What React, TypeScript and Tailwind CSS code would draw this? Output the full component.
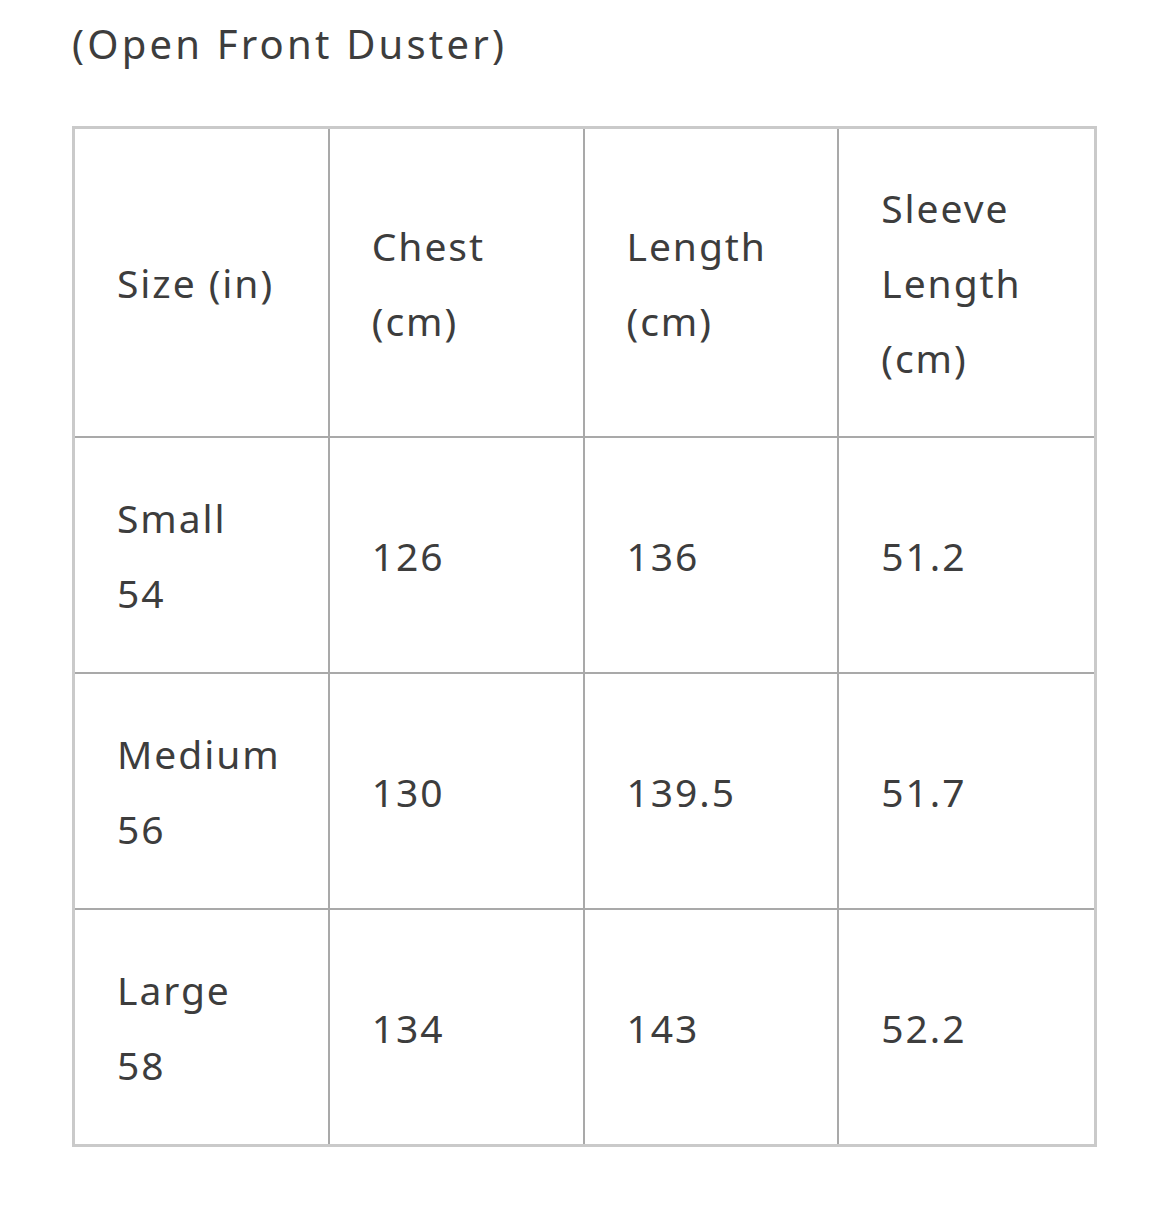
import React from "react";

const rows: { size: [string, string]; chest: string; length: string; sleeve: string }[] = [
  { size: ["Small", "54"], chest: "126", length: "136", sleeve: "51.2" },
  { size: ["Medium", "56"], chest: "130", length: "139.5", sleeve: "51.7" },
  { size: ["Large", "58"], chest: "134", length: "143", sleeve: "52.2" },
];

export default function App() {
  const font = { fontFamily: '"Noto Sans", "Liberation Sans", sans-serif' };
  const head = "align-middle text-left px-[42px] py-[41px] leading-[75px] font-normal";
  const cell = "align-middle text-left px-[42px] py-[42px] leading-[75px] font-normal";
  const inner = "border-r-2 border-b-2 border-[#a9a9a9]";
  const lastCol = "border-b-2 border-[#a9a9a9]";
  const lastRow = "border-r-2 border-[#a9a9a9]";
  return (
    <div className="min-h-[1212px] w-[1169px] bg-white pl-[72px] pt-[14px] text-[#3d3d3d]" style={font}>
      <div className="text-[40px] leading-[60px] tracking-[0.08em]">(Open Front Duster)</div>
      <table className="mt-[52px] w-[1025px] table-fixed border-separate border-spacing-0 border-[3px] border-[#cacaca] text-[39px] tracking-[0.05em]">
        <thead>
          <tr>
            <th className={`${head} ${inner}`}>Size (in)</th>
            <th className={`${head} ${inner}`}>
              Chest
              <br />
              (cm)
            </th>
            <th className={`${head} ${inner}`}>
              Length
              <br />
              (cm)
            </th>
            <th className={`${head} ${lastCol}`}>
              Sleeve
              <br />
              Length
              <br />
              (cm)
            </th>
          </tr>
        </thead>
        <tbody>
          {rows.map((r, i) => {
            const last = i === rows.length - 1;
            const a = last ? lastRow : inner;
            const b = last ? "" : lastCol;
            return (
              <tr key={r.chest}>
                <td className={`${cell} ${a}`}>
                  {r.size[0]}
                  <br />
                  {r.size[1]}
                </td>
                <td className={`${cell} ${a}`}>{r.chest}</td>
                <td className={`${cell} ${a}`}>{r.length}</td>
                <td className={`${cell} ${b}`}>{r.sleeve}</td>
              </tr>
            );
          })}
        </tbody>
      </table>
    </div>
  );
}
